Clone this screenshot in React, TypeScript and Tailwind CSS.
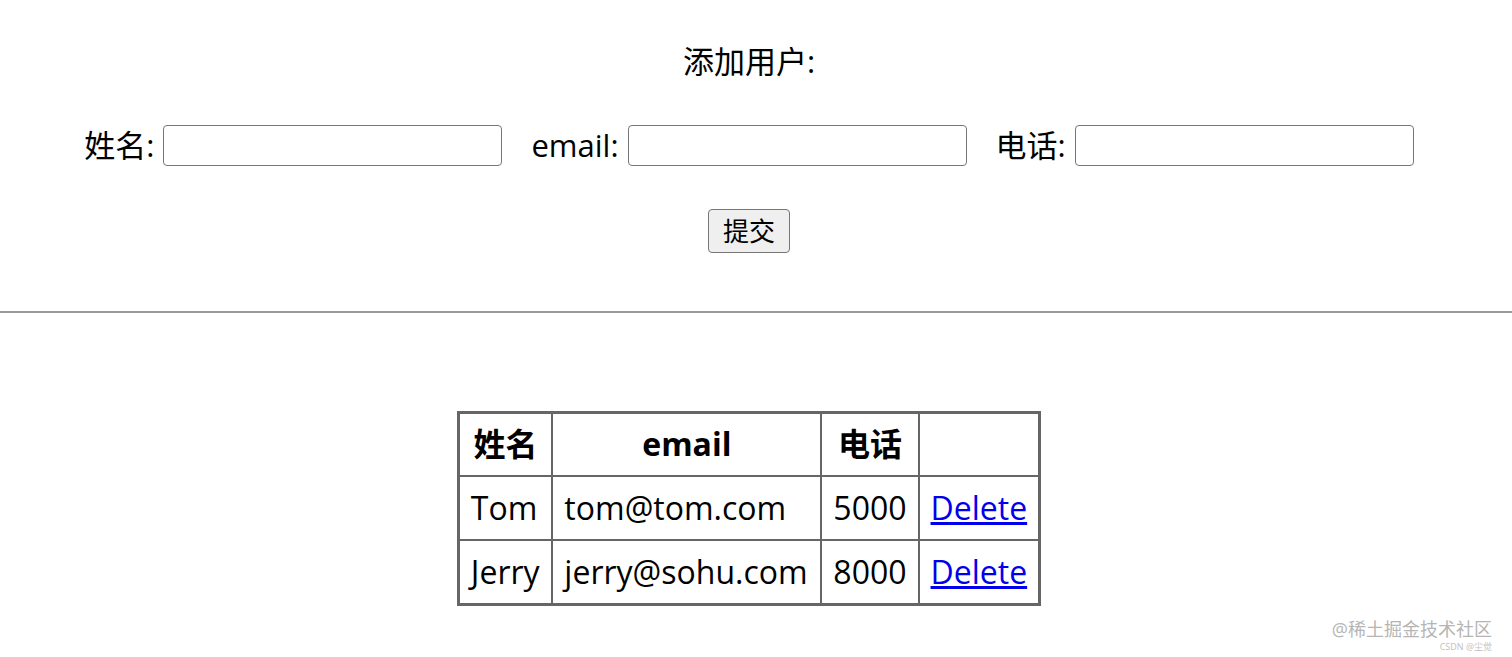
const users = [
  { name: 'Tom', email: 'tom@tom.com', salary: '5000' },
  { name: 'Jerry', email: 'jerry@sohu.com', salary: '8000' },
]

const App = () => {
  return (
    <div className="relative min-h-[657px] w-full bg-white text-black font-['Open_Sans','Noto_Sans_CJK_SC',sans-serif]">
      <div className="flex flex-col items-center pt-[40px] pr-[14px]">
        <h3 className="text-[31px] leading-[42px]">添加用户:</h3>
        <div className="mt-[40px] flex items-center justify-center text-[31px]">
          <label className="flex items-center">
            姓名:
            <input className="ml-[9px] h-[41px] w-[339px] rounded-[4px] border border-[#767676] bg-white" />
          </label>
          <label className="ml-[29px] flex items-center">
            email:
            <input className="ml-[9px] h-[41px] w-[339px] rounded-[4px] border border-[#767676] bg-white" />
          </label>
          <label className="ml-[29px] flex items-center">
            电话:
            <input className="ml-[9px] h-[41px] w-[339px] rounded-[4px] border border-[#767676] bg-white" />
          </label>
        </div>
        <button className="mt-[40px] h-[44px] w-[82px] rounded-[4px] border border-[#767676] bg-[#efefef] text-[26px] leading-none">
          提交
        </button>
      </div>
      <hr className="mt-[58px] border-t-2 border-[#9a9a9a]" />
      <div className="mt-[98px] flex justify-center pr-[14px]">
        <table className="border-collapse border-[3px] border-[#666] text-[32px]">
          <thead>
            <tr className="h-[64px]">
              <th className="w-[94px] border-2 border-[#666] font-bold">姓名</th>
              <th className="w-[269px] border-2 border-[#666] font-bold">email</th>
              <th className="w-[96px] border-2 border-[#666] font-bold">电话</th>
              <th className="w-[121px] border-2 border-[#666]"></th>
            </tr>
          </thead>
          <tbody>
            {users.map((u) => (
              <tr key={u.name} className="h-[64px]">
                <td className="border-2 border-[#666] px-[11px]">{u.name}</td>
                <td className="border-2 border-[#666] px-[11px]">{u.email}</td>
                <td className="border-2 border-[#666] px-[11px]">{u.salary}</td>
                <td className="border-2 border-[#666] px-[11px]">
                  <a href="#" className="text-[#0000ee] underline">Delete</a>
                </td>
              </tr>
            ))}
          </tbody>
        </table>
      </div>
      <div className="absolute right-[20px] bottom-[4px] flex flex-col items-end text-[#b5b5b5]">
        <span className="text-[18px] leading-[24px]">@稀土掘金技术社区</span>
        <span className="text-[9px] leading-[12px] text-[#c0c0c0]">CSDN @尘觉</span>
      </div>
    </div>
  )
}

export default App
